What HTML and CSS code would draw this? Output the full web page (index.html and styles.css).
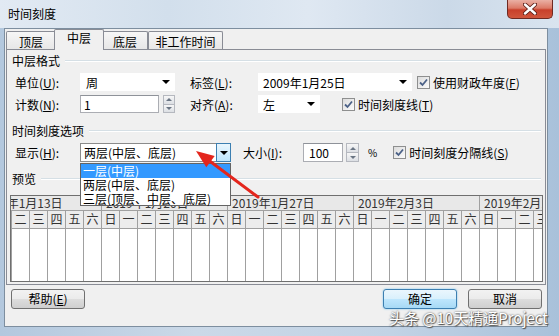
FILE: index.html
```html
<!DOCTYPE html>
<html lang="zh-CN">
<head>
    <meta charset="UTF-8">
    <meta name="viewport" content="width=device-width, initial-scale=1.0">
    <title>时间刻度</title>
    <link rel="stylesheet" href="styles.css">
</head>
<body>
<div class="window">
    <div class="titlebar">
        <span class="title">时间刻度</span>
        <div class="close">
            <svg width="14" height="12" viewBox="0 0 14 12">
                <path d="M2 1.5 L12 10.5 M12 1.5 L2 10.5" stroke="#5a1d16" stroke-width="4.2" stroke-linecap="round"/>
                <path d="M2 1.5 L12 10.5 M12 1.5 L2 10.5" stroke="#fff" stroke-width="2.4" stroke-linecap="round"/>
            </svg>
        </div>
    </div>
    <div class="client">
        <div class="tabs">
            <div class="tab t1">顶层</div>
            <div class="tab t2 active">中层</div>
            <div class="tab t3">底层</div>
            <div class="tab t4">非工作时间</div>
        </div>
        <div class="panel">
            <div class="group-head"><span>中层格式</span><i></i></div>
            <div class="row r1">
                <label class="lbl">单位(<u>U</u>):</label>
                <div class="combo w-unit"><span>周</span><b class="tri"></b></div>
                <label class="lbl lbl2">标签(<u>L</u>):</label>
                <div class="combo w-label"><span>2009年1月25日</span><b class="tri"></b></div>
                <span class="check c-fiscal"><span class="box"><svg width="11" height="11" viewBox="0 0 11 11"><path d="M2 5.5 L4.5 8 L9 2.5" fill="none" stroke="#4b6187" stroke-width="1.8"/></svg></span>使用财政年度(<u>F</u>)</span>
            </div>
            <div class="row r2">
                <label class="lbl">计数(<u>N</u>):</label>
                <div class="field w-count">1</div>
                <div class="spin"><span class="up"></span><span class="down"></span></div>
                <label class="lbl lbl2">对齐(<u>A</u>):</label>
                <div class="combo w-align"><span>左</span><b class="tri"></b></div>
                <span class="check c-line"><span class="box"><svg width="11" height="11" viewBox="0 0 11 11"><path d="M2 5.5 L4.5 8 L9 2.5" fill="none" stroke="#4b6187" stroke-width="1.8"/></svg></span>时间刻度线(<u>T</u>)</span>
            </div>
            <div class="group-head g2"><span>时间刻度选项</span><i></i></div>
            <div class="row r3">
                <label class="lbl">显示(<u>H</u>):</label>
                <div class="combo focus w-show"><span>两层(中层、底层)</span><b class="drop-btn"><b class="tri"></b></b></div>
                <label class="lbl lbl3">大小(<u>I</u>):</label>
                <div class="field w-size">100</div>
                <div class="spin s2"><span class="up"></span><span class="down"></span></div>
                <span class="pct">%</span>
                <span class="check c-sep"><span class="box"><svg width="11" height="11" viewBox="0 0 11 11"><path d="M2 5.5 L4.5 8 L9 2.5" fill="none" stroke="#4b6187" stroke-width="1.8"/></svg></span>时间刻度分隔线(<u>S</u>)</span>
            </div>
            <div class="group-head g3"><span>预览</span><i></i></div>
            <div class="preview">
                <div class="weeks">
                    <div class="week">2019年1月13日</div>
                    <div class="week">2019年1月20日</div>
                    <div class="week">2019年1月27日</div>
                    <div class="week">2019年2月3日</div>
                    <div class="week">2019年2月10日</div>
                </div>
                <div class="days">
                    <div class="day"><span>日</span></div><div class="day"><span>一</span></div><div class="day"><span>二</span></div><div class="day"><span>三</span></div><div class="day"><span>四</span></div><div class="day"><span>五</span></div><div class="day"><span>六</span></div>
                    <div class="day"><span>日</span></div><div class="day"><span>一</span></div><div class="day"><span>二</span></div><div class="day"><span>三</span></div><div class="day"><span>四</span></div><div class="day"><span>五</span></div><div class="day"><span>六</span></div>
                    <div class="day"><span>日</span></div><div class="day"><span>一</span></div><div class="day"><span>二</span></div><div class="day"><span>三</span></div><div class="day"><span>四</span></div><div class="day"><span>五</span></div><div class="day"><span>六</span></div>
                    <div class="day"><span>日</span></div><div class="day"><span>一</span></div><div class="day"><span>二</span></div><div class="day"><span>三</span></div><div class="day"><span>四</span></div><div class="day"><span>五</span></div><div class="day"><span>六</span></div>
                    <div class="day"><span>日</span></div><div class="day"><span>一</span></div><div class="day"><span>二</span></div><div class="day"><span>三</span></div><div class="day"><span>四</span></div><div class="day"><span>五</span></div><div class="day"><span>六</span></div>
                </div>
            </div>
        </div>
        <div class="buttons">
            <button class="btn">帮助(<u>E</u>)</button>
            <span class="spacer"></span>
            <button class="btn default">确定</button>
            <button class="btn">取消</button>
        </div>
    </div>

    <ul class="droplist">
        <li class="sel">一层(中层)</li>
        <li>两层(中层、底层)</li>
        <li>三层(顶层、中层、底层)</li>
    </ul>

    <svg class="arrow" width="559" height="336" viewBox="0 0 559 336">
        <path d="M258 197 L207 159" stroke="#e4261d" stroke-width="3" stroke-linecap="round"/>
        <polygon points="196,151 214.7,156.1 206.3,167.3" fill="#e4261d"/>
    </svg>

    <div class="watermark">头条 @10天精通Project</div>
</div>
</body>
</html>
```

FILE: styles.css
```css
* {
    box-sizing: border-box;
}
body {
    margin: 0;
    font-family: "Noto Sans CJK SC", "Liberation Sans", sans-serif;
    font-size: 12px;
    color: #000;
}
.window {
    position: relative;
    width: 559px;
    height: 336px;
    overflow: hidden;
    display: flex;
    flex-direction: column;
    background: linear-gradient(90deg, #b3c8de, #cbd9e8 35%, #c2d3e5 70%, #a9c1da);
}
.titlebar {
    height: 28px;
    flex: 0 0 28px;
    display: flex;
    align-items: flex-start;
    padding-left: 8px;
    background: linear-gradient(90deg, #e2eaf3, #d2dfec 30%, #dfe8f2 55%, #cbd9e8 80%, #d9e4ef);
}
.title {
    margin-top: 6px;
    line-height: 15px;
}
.close {
    margin-left: auto;
    margin-right: 6px;
    width: 46px;
    height: 19px;
    display: flex;
    align-items: center;
    justify-content: center;
    border: 1px solid #6e2a22;
    border-top: none;
    border-radius: 0 0 5px 5px;
    background: linear-gradient(180deg, #eab0a4 0%, #dc7a67 45%, #c8402b 55%, #d0563c 100%);
}

/* dialog client area */
.client {
    flex: 1;
    margin: 0 11px 9px 4px;
    background: #f0f0f0;
    border: 1px solid #7d8e9f;
    display: flex;
    flex-direction: column;
}
.tabs {
    height: 21px;
    display: flex;
    align-items: flex-end;
    padding-left: 1px;
}
.tab {
    height: 19px;
    border: 1px solid #898c95;
    border-bottom: none;
    border-radius: 2px 2px 0 0;
    background: linear-gradient(180deg, #f6f6f6, #e6e6e6);
    text-align: center;
    line-height: 17px;
    padding-top: 1px;
}
.t1 { width: 50px; }
.t2 { width: 50px; }
.t3 { width: 46px; }
.t4 { width: 75px; }
.tab.active {
    position: relative;
    z-index: 1;
    height: 21px;
    margin: 0 -2px;
    background: #f0f0f0;
    line-height: 15px;
    padding-top: 0;
}
.panel {
    margin: -1px 1px 0;
    height: 236px;
    border: 1px solid #898c95;
    background: #f0f0f0;
    padding: 4px 3px 0;
}
.group-head {
    display: flex;
    align-items: center;
    height: 14px;
    line-height: 14px;
    padding-left: 2px;
}
.group-head i {
    flex: 1;
    margin-left: 5px;
    margin-right: 1px;
    border-top: 1px solid #d5dfe5;
    border-bottom: 1px solid #fff;
}
.g2 { margin-top: 11px; }
.g3 { margin-top: 10px; }

.row {
    display: flex;
    align-items: center;
    padding-left: 5px;
    height: 18px;
}
.r1 { margin-top: 5px; }
.r2 { margin-top: 4px; }
.r3 { margin-top: 5px; height: 19px; }
.lbl {
    width: 65px;
    white-space: nowrap;
}
.lbl2 {
    margin-left: 15px;
    width: 68px;
}
.lbl3 {
    margin-left: 12px;
    width: 60px;
}

.combo,
.field {
    height: 18px;
    background: #fff;
    display: flex;
    align-items: center;
    padding-left: 3px;
    white-space: nowrap;
}
.combo {
    border: 1px solid #fff;
}
.combo span {
    flex: 1;
}
.tri {
    display: inline-block;
    width: 0;
    height: 0;
    border-left: 4px solid transparent;
    border-right: 4px solid transparent;
    border-top: 4px solid #000;
    margin-right: 4px;
}
.w-unit { width: 95px; padding-left: 5px; }
.w-label { width: 154px; padding-left: 4px; }
.w-align { width: 62px; padding-left: 4px; }
.combo.focus {
    height: 19px;
    border: 1px solid #8b8b8b;
    border-right: none;
}
.w-show { width: 151px; }
.drop-btn {
    width: 15px;
    height: 19px;
    border: 1px solid #3c7fb1;
    background: linear-gradient(180deg, #eaf6fd, #bee6fd);
    display: flex;
    align-items: center;
    justify-content: center;
}
.drop-btn .tri {
    margin-right: 0;
}
.field {
    border: 1px solid #abadb3;
    border-top-color: #8e9299;
}
.w-count { width: 79px; }
.w-size { width: 40px; height: 19px; padding-left: 5px; }

.spin {
    margin-left: 4px;
    width: 12px;
    height: 18px;
    display: flex;
    flex-direction: column;
}
.spin.s2 {
    margin-left: 3px;
    width: 13px;
    height: 19px;
}
.spin span {
    flex: 1;
    border: 1px solid #b5b8bf;
    background: linear-gradient(180deg, #f7f7f7, #dcdfe4);
    display: flex;
    align-items: center;
    justify-content: center;
}
.spin .down {
    border-top: none;
}
.spin .up::after,
.spin .down::after {
    content: "";
    border-left: 3px solid transparent;
    border-right: 3px solid transparent;
}
.spin .up::after {
    border-bottom: 3px solid #6a7583;
}
.spin .down::after {
    border-top: 3px solid #6a7583;
}
.pct {
    margin-left: 9px;
    font-size: 10px;
}

.check {
    display: flex;
    align-items: center;
    white-space: nowrap;
}
.c-fiscal { margin-left: 5px; }
.c-line { margin-left: 22px; }
.c-sep { margin-left: 16px; }
.box {
    width: 13px;
    height: 13px;
    margin-right: 3px;
    border: 1px solid #8e8f8f;
    background: linear-gradient(135deg, #dcdcdc, #fbfbfb);
    display: flex;
    align-items: center;
    justify-content: center;
}

/* preview grid */
.preview {
    margin-top: 9px;
    width: 533px;
    height: 87px;
    border: 1px solid #6f6f6f;
    background: #fff;
    overflow: hidden;
}
.weeks {
    display: flex;
    margin-left: -36px;
    height: 15px;
    background: #e8e8e8;
    border-bottom: 1px solid #a0a0a0;
}
.week {
    flex: 0 0 126px;
    border-left: 1px solid #a0a0a0;
    padding-left: 4px;
    line-height: 14px;
    white-space: nowrap;
    color: #333;
}
.days {
    display: flex;
    margin-left: -36px;
    height: 70px;
}
.day {
    flex: 0 0 18px;
    border-left: 1px solid #a0a0a0;
}
.day span {
    display: block;
    height: 18px;
    line-height: 16px;
    text-align: center;
    background: #ececec;
    border-bottom: 1px solid #a0a0a0;
    color: #333;
}

/* dialog buttons */
.buttons {
    display: flex;
    gap: 11px;
    margin-top: 4px;
    padding: 0 5px 0 6px;
}
.spacer {
    flex: 1;
}
.btn {
    width: 74px;
    height: 20px;
    padding: 0;
    font-family: inherit;
    font-size: 12px;
    line-height: 16px;
    color: #000;
    border: 1px solid #707070;
    border-radius: 3px;
    background: linear-gradient(180deg, #f2f2f2 0%, #ebebeb 50%, #dddddd 51%, #cfcfcf 100%);
}
.btn.default {
    border-color: #3c7fb1;
    background: linear-gradient(180deg, #eaf6fd 0%, #d9f0fc 50%, #bee6fd 51%, #a7d9f5 100%);
    box-shadow: 0 0 2px #6ec3ef;
}

/* open dropdown list */
.droplist {
    position: absolute;
    left: 80px;
    top: 163px;
    width: 151px;
    height: 43px;
    margin: 0;
    padding: 0;
    list-style: none;
    background: #fff;
    border: 1px solid #646464;
}
.droplist li {
    height: 14px;
    line-height: 14px;
    padding-left: 2px;
    white-space: nowrap;
}
.droplist li.sel {
    background: #3399ff;
    color: #fff;
}

.arrow {
    position: absolute;
    left: 0;
    top: 0;
    pointer-events: none;
}

.watermark {
    position: absolute;
    right: 11px;
    top: 309px;
    font-size: 15px;
    line-height: 18px;
    color: #fff;
    text-shadow: 0 0 2px #3a3a3a, 1px 1px 1px #555;
    white-space: nowrap;
}
```
